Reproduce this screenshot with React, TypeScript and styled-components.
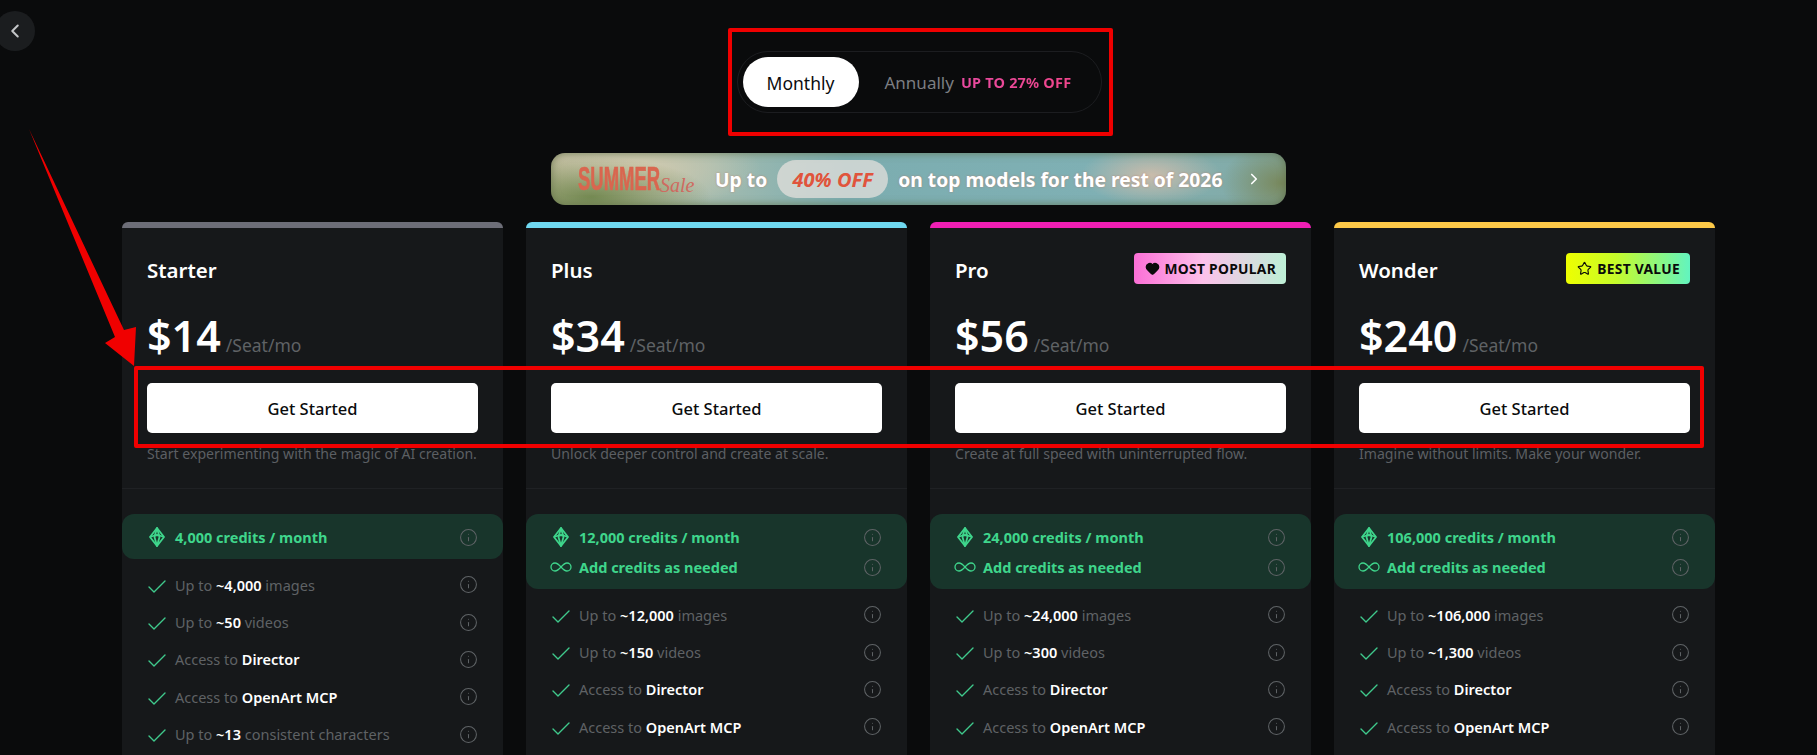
import styled, { createGlobalStyle } from "styled-components";
import { ChevronLeft, ChevronRight, Check, Info, Infinity as InfinityIcon, Heart, Star } from "lucide-react";

const GlobalStyle = createGlobalStyle`
  html, body {
    margin: 0;
    padding: 0;
    height: 755px;
    overflow: hidden;
    background: #0a0b0c;
    font-family: "Noto Sans", "Open Sans", sans-serif;
  }
  * { box-sizing: border-box; }
`;

const Page = styled.div`
  position: relative;
  height: 755px;
  overflow: hidden;
  padding: 51px 0 0 20px;
  display: flex;
  flex-direction: column;
  align-items: center;
`;

const BackButton = styled.div`
  position: absolute;
  left: -5px;
  top: 11px;
  width: 40px;
  height: 40px;
  border-radius: 50%;
  background: #1b1d1f;
  color: #c4c6c8;
  display: flex;
  align-items: center;
  justify-content: center;
`;

const Toggle = styled.div`
  width: 365px;
  height: 62px;
  border: 1px solid #1c1d20;
  border-radius: 31px;
  padding: 5px;
  display: flex;
  align-items: center;
  margin-left: 1px;
`;

const MonthlyPill = styled.div`
  width: 116px;
  height: 50px;
  border-radius: 25px;
  background: #fff;
  color: #0b0c0e;
  font-size: 17.5px;
  padding-top: 1px;
  display: flex;
  align-items: center;
  justify-content: center;
`;

const Annually = styled.div`
  margin: 1px 0 0 26px;
  color: #7c7e82;
  font-size: 17px;
`;

const Discount = styled.div`
  margin-left: 7px;
  font-size: 14.5px;
  font-weight: 700;
  letter-spacing: 0.2px;
  background: linear-gradient(90deg, #e84aa0, #f0468c);
  -webkit-background-clip: text;
  background-clip: text;
  color: transparent;
`;

const Banner = styled.div`
  margin-top: 40px;
  width: 735px;
  height: 52px;
  flex: none;
  border-radius: 14px;
  display: flex;
  align-items: center;
  padding-left: 27px;
  color: #fff;
  font-weight: 700;
  font-size: 19.3px;
  white-space: nowrap;
  text-shadow: 0 0 2px rgba(190, 110, 90, 0.7);
  box-shadow: inset 0 0 9px rgba(90, 105, 65, 0.75);
  background:
    radial-gradient(ellipse 70px 30px at 600px 22px, rgba(214, 190, 170, 0.85), transparent),
    radial-gradient(ellipse 120px 40px at 40px 44px, rgba(105, 130, 70, 0.85), transparent),
    radial-gradient(ellipse 130px 42px at 80px 16px, rgba(214, 205, 178, 0.98), transparent),
    radial-gradient(ellipse 60px 40px at 730px 30px, rgba(120, 135, 90, 0.95), transparent),
    linear-gradient(90deg, #b7b594 0%, #a3bbaf 22%, #7cadb0 40%, #7fb0b4 75%, #84aaa5 100%);
`;

const SaleLogo = styled.div`
  display: flex;
  align-items: center;
  color: #d9664f;
  width: 137px;
  flex: none;
  text-shadow: none;
`;

const SaleWord = styled.span`
  font-family: "Liberation Sans", sans-serif;
  font-weight: 700;
  font-size: 33px;
  line-height: 34px;
  display: inline-block;
  width: 82px;
  -webkit-text-stroke: 0.6px #d9664f;
  transform: scaleX(0.56);
  transform-origin: left center;
`;

const SaleScript = styled.span`
  font-family: "Liberation Serif", serif;
  font-style: italic;
  font-weight: 400;
  font-size: 20px;
  line-height: 22px;
  margin: 12px 0 0 0;
  color: #cf6a60;
`;

const OffPill = styled.span`
  width: 111px;
  height: 38px;
  margin: 0 10px;
  flex: none;
  border-radius: 19px;
  background: rgba(232, 226, 222, 0.72);
  color: #e0543c;
  font-size: 20px;
  font-style: italic;
  text-shadow: none;
  display: flex;
  align-items: center;
  justify-content: center;
`;

const BannerChevron = styled.span`
  margin-left: 23px;
  display: flex;
`;

const CardRow = styled.div`
  margin-top: 17px;
  display: flex;
  gap: 23px;
  flex: none;
`;

const Card = styled.div<{ $accent: string }>`
  width: 381px;
  height: 600px;
  background: #16181a;
  border-top: 6px solid ${(p) => p.$accent};
  border-radius: 6px 6px 0 0;
`;

const CardHead = styled.div`
  padding: 0 25px;
`;

const TitleRow = styled.div`
  height: 50px;
  margin-top: 25px;
  display: flex;
  align-items: flex-start;
  justify-content: space-between;
`;

const Title = styled.div`
  color: #fff;
  font-size: 20.5px;
  font-weight: 600;
  line-height: 28px;
  margin-top: 3px;
`;

const Badge = styled.div<{ $bg: string }>`
  height: 31px;
  padding: 0 10px 0 11px;
  border-radius: 4px;
  background: ${(p) => p.$bg};
  color: #0a0a0a;
  font-size: 13.8px;
  font-weight: 700;
  letter-spacing: 0.3px;
  display: flex;
  align-items: center;
  gap: 5px;
`;

const PriceRow = styled.div`
  height: 60px;
  margin-top: 3px;
  display: flex;
  align-items: baseline;
  gap: 5px;
`;

const Price = styled.span`
  color: #fff;
  font-size: 43px;
  font-weight: 600;
  line-height: 60px;
`;

const PriceUnit = styled.span`
  color: #5f6265;
  font-size: 17.5px;
`;

const CtaButton = styled.div`
  margin-top: 17px;
  height: 50px;
  border-radius: 5px;
  background: #fff;
  color: #0a0b0c;
  font-size: 16.5px;
  font-weight: 500;
  display: flex;
  align-items: center;
  justify-content: center;
`;

const Blurb = styled.div`
  margin-top: 9px;
  color: #5c5f63;
  font-size: 14.1px;
  line-height: 24px;
  white-space: nowrap;
`;

const Divider = styled.div`
  margin-top: 22px;
  height: 1px;
  background: #1f2124;
`;

const CreditBand = styled.div`
  margin-top: 25px;
  padding: 8px 25px 7px;
  border-radius: 12px;
  background: #18352b;
`;

const CreditLine = styled.div`
  height: 30px;
  display: flex;
  align-items: center;
  color: #3fd68c;
  font-size: 14.5px;
  font-weight: 700;
`;

const IconSlot = styled.span`
  width: 28px;
  flex: none;
  display: flex;
  align-items: center;
`;

const DiamondSvg = styled.svg`
  flex: none;
  margin-left: 2px;
`;

const Grow = styled.span`
  flex: 1;
`;

const InfoIcon = styled(Info)`
  flex: none;
  color: #5f6366;
`;

const Features = styled.div`
  padding: 7px 25px 0;
`;

const Feature = styled.div`
  height: 37.4px;
  display: flex;
  align-items: center;
  color: #5f6265;
  font-size: 14.5px;
  white-space: nowrap;
`;

const CheckIcon = styled(Check)`
  flex: none;
  color: #3fc98c;
  margin: 4px 0 0 -2px;
`;

const InfinityGlyph = styled(InfinityIcon)`
  flex: none;
  margin-left: -2px;
`;

const Strong = styled.b`
  color: #fff;
  font-weight: 600;
`;

const RedBox = styled.div<{ $left: number; $top: number; $width: number; $height: number }>`
  position: absolute;
  left: ${(p) => p.$left}px;
  top: ${(p) => p.$top}px;
  width: ${(p) => p.$width}px;
  height: ${(p) => p.$height}px;
  border: 4px solid #f00000;
  border-radius: 2px;
`;

const ArrowSvg = styled.svg`
  position: absolute;
  left: 0;
  top: 0;
`;

function CreditDiamond() {
  return (
    <DiamondSvg width="16" height="20" viewBox="0 0 16 20" fill="none" stroke="#3fd68c" strokeWidth="1.8" strokeLinejoin="round">
      <path d="M8 1 L15 10 L8 19 L1 10 Z" />
      <path d="M8 1 L5.5 10 L8 19 L10.5 10 Z" />
      <path d="M1 10 L5.5 8.5 L8 8 L10.5 8.5 L15 10" />
    </DiamondSvg>
  );
}

type Row = { pre: string; strong: string; post?: string };
type Plan = {
  name: string;
  price: string;
  accent: string;
  blurb: string;
  credits: string;
  addCredits?: boolean;
  badge?: { label: string; bg: string; icon: "heart" | "star" };
  rows: Row[];
};

const plans: Plan[] = [
  {
    name: "Starter",
    price: "$14",
    accent: "#6d6e78",
    blurb: "Start experimenting with the magic of AI creation.",
    credits: "4,000 credits / month",
    rows: [
      { pre: "Up to ", strong: "~4,000", post: " images" },
      { pre: "Up to ", strong: "~50", post: " videos" },
      { pre: "Access to ", strong: "Director" },
      { pre: "Access to ", strong: "OpenArt MCP" },
      { pre: "Up to ", strong: "~13", post: " consistent characters" },
    ],
  },
  {
    name: "Plus",
    price: "$34",
    accent: "#6fd8f0",
    blurb: "Unlock deeper control and create at scale.",
    credits: "12,000 credits / month",
    addCredits: true,
    rows: [
      { pre: "Up to ", strong: "~12,000", post: " images" },
      { pre: "Up to ", strong: "~150", post: " videos" },
      { pre: "Access to ", strong: "Director" },
      { pre: "Access to ", strong: "OpenArt MCP" },
    ],
  },
  {
    name: "Pro",
    price: "$56",
    accent: "#f01fb4",
    blurb: "Create at full speed with uninterrupted flow.",
    credits: "24,000 credits / month",
    addCredits: true,
    badge: { label: "MOST POPULAR", bg: "linear-gradient(90deg, #fb6fd6, #fdc0ea 45%, #bdf0d6)", icon: "heart" },
    rows: [
      { pre: "Up to ", strong: "~24,000", post: " images" },
      { pre: "Up to ", strong: "~300", post: " videos" },
      { pre: "Access to ", strong: "Director" },
      { pre: "Access to ", strong: "OpenArt MCP" },
    ],
  },
  {
    name: "Wonder",
    price: "$240",
    accent: "#fdc948",
    blurb: "Imagine without limits. Make your wonder.",
    credits: "106,000 credits / month",
    addCredits: true,
    badge: { label: "BEST VALUE", bg: "linear-gradient(90deg, #eeff00, #c6fb2a 40%, #62f4c0)", icon: "star" },
    rows: [
      { pre: "Up to ", strong: "~106,000", post: " images" },
      { pre: "Up to ", strong: "~1,300", post: " videos" },
      { pre: "Access to ", strong: "Director" },
      { pre: "Access to ", strong: "OpenArt MCP" },
    ],
  },
];

export default function App() {
  return (
    <>
      <GlobalStyle />
      <Page>
        <BackButton>
          <ChevronLeft size={22} strokeWidth={2.2} />
        </BackButton>

        <Toggle>
          <MonthlyPill>Monthly</MonthlyPill>
          <Annually>Annually</Annually>
          <Discount>UP TO 27% OFF</Discount>
        </Toggle>

        <Banner>
          <SaleLogo>
            <SaleWord>SUMMER</SaleWord>
            <SaleScript>Sale</SaleScript>
          </SaleLogo>
          <span>Up to</span>
          <OffPill>40% OFF</OffPill>
          <span>on top models for the rest of 2026</span>
          <BannerChevron>
            <ChevronRight size={18} strokeWidth={2.2} />
          </BannerChevron>
        </Banner>

        <CardRow>
          {plans.map((plan) => (
            <Card key={plan.name} $accent={plan.accent}>
              <CardHead>
                <TitleRow>
                  <Title>{plan.name}</Title>
                  {plan.badge && (
                    <Badge $bg={plan.badge.bg}>
                      {plan.badge.icon === "heart" ? (
                        <Heart size={15} fill="#0a0a0a" strokeWidth={2} />
                      ) : (
                        <Star size={15} strokeWidth={1.8} />
                      )}
                      {plan.badge.label}
                    </Badge>
                  )}
                </TitleRow>
                <PriceRow>
                  <Price>{plan.price}</Price>
                  <PriceUnit>/Seat/mo</PriceUnit>
                </PriceRow>
                <CtaButton>Get Started</CtaButton>
                <Blurb>{plan.blurb}</Blurb>
              </CardHead>
              <Divider />
              <CreditBand>
                <CreditLine>
                  <IconSlot>
                    <CreditDiamond />
                  </IconSlot>
                  {plan.credits}
                  <Grow />
                  <InfoIcon size={19} strokeWidth={1.3} />
                </CreditLine>
                {plan.addCredits && (
                  <CreditLine>
                    <IconSlot>
                      <InfinityGlyph size={24} strokeWidth={1.3} />
                    </IconSlot>
                    Add credits as needed
                    <Grow />
                    <InfoIcon size={19} strokeWidth={1.3} />
                  </CreditLine>
                )}
              </CreditBand>
              <Features>
                {plan.rows.map((row) => (
                  <Feature key={row.pre + row.strong}>
                    <IconSlot>
                      <CheckIcon size={24} strokeWidth={1.4} />
                    </IconSlot>
                    <span>
                      {row.pre}
                      <Strong>{row.strong}</Strong>
                      {row.post}
                    </span>
                    <Grow />
                    <InfoIcon size={19} strokeWidth={1.3} />
                  </Feature>
                ))}
              </Features>
            </Card>
          ))}
        </CardRow>

        <RedBox $left={728} $top={28} $width={385} $height={108} />
        <RedBox $left={134} $top={366} $width={1570} $height={82} />
        <ArrowSvg width="160" height="380" viewBox="0 0 160 380">
          <polygon points="29,129 124,330 136,327 134,366 105,343 115,337" fill="#f00000" />
        </ArrowSvg>
      </Page>
    </>
  );
}
